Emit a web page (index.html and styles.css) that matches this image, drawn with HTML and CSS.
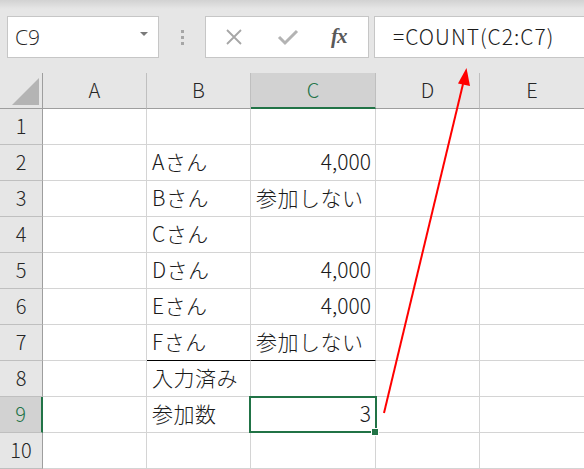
FILE: index.html
```html
<!DOCTYPE html>
<html lang="ja">
<head>
<meta charset="utf-8">
<link rel="stylesheet" href="styles.css">
</head>
<body>
<div class="page">
  <div class="toolbar">
    <div class="namebox"><span class="name-text">C9</span><span class="dd"></span></div>
    <div class="dots"><i></i><i></i><i></i></div>
    <div class="fnbox">
      <svg class="ico" width="20" height="20" viewBox="0 0 20 20"><path d="M3 3 L17 17 M17 3 L3 17" stroke="#a6a6a6" stroke-width="1.8" fill="none"/></svg>
      <svg class="ico" width="22" height="20" viewBox="0 0 22 20"><path d="M2 10 L8 16 L20 4" stroke="#b3b3b3" stroke-width="3" fill="none"/></svg>
      <span class="fx">fx</span>
    </div>
    <div class="formula">=COUNT(C2:C7)</div>
  </div>
  <div class="grid">
    <div class="corner"><span class="tri"></span></div>
    <div class="ch">A</div><div class="ch">B</div><div class="ch sel">C</div><div class="ch">D</div><div class="ch">E</div>

    <div class="rh">1</div><div class="c"></div><div class="c"></div><div class="c"></div><div class="c"></div><div class="c"></div>
    <div class="rh">2</div><div class="c"></div><div class="c">Aさん</div><div class="c num">4,000</div><div class="c"></div><div class="c"></div>
    <div class="rh">3</div><div class="c"></div><div class="c">Bさん</div><div class="c">参加しない</div><div class="c"></div><div class="c"></div>
    <div class="rh">4</div><div class="c"></div><div class="c">Cさん</div><div class="c"></div><div class="c"></div><div class="c"></div>
    <div class="rh">5</div><div class="c"></div><div class="c">Dさん</div><div class="c num">4,000</div><div class="c"></div><div class="c"></div>
    <div class="rh">6</div><div class="c"></div><div class="c">Eさん</div><div class="c num">4,000</div><div class="c"></div><div class="c"></div>
    <div class="rh">7</div><div class="c"></div><div class="c under">Fさん</div><div class="c under">参加しない</div><div class="c"></div><div class="c"></div>
    <div class="rh">8</div><div class="c"></div><div class="c">入力済み</div><div class="c"></div><div class="c"></div><div class="c"></div>
    <div class="rh sel">9</div><div class="c"></div><div class="c">参加数</div><div class="c num active">3<span class="ring"></span><span class="handle"></span></div><div class="c"></div><div class="c"></div>
    <div class="rh">10</div><div class="c"></div><div class="c"></div><div class="c"></div><div class="c"></div><div class="c"></div>
  </div>
  <svg class="arrow" width="584" height="469" viewBox="0 0 584 469">
    <line x1="384" y1="413" x2="463" y2="84" stroke="#ff0000" stroke-width="2"/>
    <polygon points="466.5,68 470,86 458,83.5" fill="#ff0000"/>
  </svg>
</div>
</body>
</html>
```
FILE: styles.css
```css
html, body {
  margin: 0;
  padding: 0;
}
body {
  width: 584px;
  height: 469px;
  overflow: hidden;
  background: #ffffff;
  font-family: "Noto Sans CJK JP", "Noto Sans", sans-serif;
  font-weight: 300;
}
.page {
  position: relative;
  width: 584px;
  height: 469px;
  overflow: hidden;
}
.toolbar {
  height: 73px;
  box-sizing: border-box;
  padding: 16px 0 0 7px;
  display: flex;
  align-items: flex-start;
  background: linear-gradient(#d2d2d2 0px, #e6e6e6 9px, #e6e6e6 100%);
}
.namebox {
  width: 152px;
  height: 42px;
  box-sizing: border-box;
  background: #fff;
  border: 1px solid #c6c6c6;
  display: flex;
  align-items: center;
  justify-content: space-between;
  padding: 0 10px 0 7px;
}
.name-text {
  font-family: "Open Sans", "Noto Sans", sans-serif;
  font-size: 21px;
  color: #262626;
  line-height: 1;
  margin-top: 1px;
}
.dd {
  width: 0;
  height: 0;
  border-left: 4px solid transparent;
  border-right: 4px solid transparent;
  border-top: 4px solid #7a7a7a;
  margin-top: -6px;
}
.dots {
  width: 46px;
  height: 42px;
  display: flex;
  flex-direction: column;
  align-items: center;
  justify-content: center;
  gap: 3px;
}
.dots i {
  display: block;
  width: 3px;
  height: 3px;
  background: #a6a6a6;
}
.fnbox {
  width: 164px;
  height: 42px;
  box-sizing: border-box;
  background: #fff;
  border: 1px solid #c6c6c6;
  display: flex;
  align-items: center;
  padding-left: 18px;
}
.ico {
  display: block;
  margin-right: 33px;
}
.fnbox .ico:nth-child(2) {
  margin-right: 32px;
}
.fx {
  font-family: "Liberation Serif", "DejaVu Serif", serif;
  font-style: italic;
  font-weight: bold;
  font-size: 21px;
  color: #595959;
  letter-spacing: -1px;
  margin-top: -2px;
}
.formula {
  flex: 1;
  height: 42px;
  box-sizing: border-box;
  margin-left: 5px;
  background: #fff;
  border: 1px solid #c6c6c6;
  border-right: none;
  padding-left: 18px;
  font-size: 21px;
  letter-spacing: 1px;
  line-height: 38px;
  color: #1a1a1a;
  white-space: nowrap;
}
.grid {
  display: grid;
  grid-template-columns: 43px 104px 104px 125px 104px 105px;
  grid-template-rows: repeat(11, 36px);
}
.corner {
  position: relative;
  background: #e6e6e6;
  border-right: 1px solid #9e9e9e;
  border-bottom: 1px solid #9e9e9e;
  box-sizing: border-box;
}
.tri {
  position: absolute;
  right: 3px;
  bottom: 3px;
  width: 0;
  height: 0;
  border-left: 27px solid transparent;
  border-bottom: 27px solid #b4b4b4;
}
.ch {
  background: #e6e6e6;
  border-right: 1px solid #bfbfbf;
  border-bottom: 1px solid #9e9e9e;
  box-sizing: border-box;
  display: flex;
  align-items: center;
  justify-content: center;
  font-size: 20px;
  color: #262626;
  padding-bottom: 3px;
}
.ch.sel {
  background: #d2d2d2;
  color: #217346;
  border-bottom: 2px solid #217346;
  padding-bottom: 2px;
}
.rh {
  background: #e6e6e6;
  border-right: 1px solid #9e9e9e;
  border-bottom: 1px solid #bfbfbf;
  box-sizing: border-box;
  display: flex;
  align-items: center;
  justify-content: center;
  font-size: 20px;
  color: #262626;
  padding-bottom: 3px;
}
.rh.sel {
  background: #d2d2d2;
  color: #217346;
  border-right: 2px solid #217346;
}
.c {
  border-right: 1px solid #d4d4d4;
  border-bottom: 1px solid #d4d4d4;
  box-sizing: border-box;
  display: flex;
  align-items: center;
  padding: 0 4px 3px 5px;
  font-size: 21px;
  letter-spacing: 0.5px;
  color: #1a1a1a;
  white-space: nowrap;
  overflow: visible;
}
.c.num {
  justify-content: flex-end;
  letter-spacing: 0;
}
.c.under {
  border-bottom: 1px solid #000;
}
.c.active {
  position: relative;
}
.ring {
  position: absolute;
  left: -2px;
  top: -1px;
  right: -2px;
  bottom: -1px;
  border: 2px solid #217346;
}
.handle {
  position: absolute;
  right: -4px;
  bottom: -4px;
  width: 6px;
  height: 6px;
  background: #217346;
  border: 1px solid #fff;
}
.arrow {
  position: absolute;
  left: 0;
  top: 0;
  pointer-events: none;
}
```
